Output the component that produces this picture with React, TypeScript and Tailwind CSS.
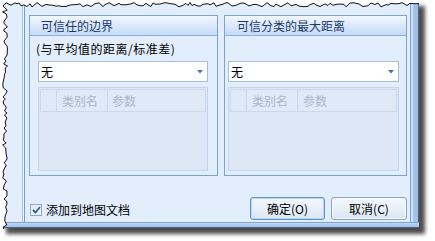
import React from "react";

function makeRand(seed: number) {
  let s = seed;
  return () => {
    s = (s * 16807) % 2147483647;
    return s / 2147483647;
  };
}

function TornEdges() {
  const r = makeRand(12345);
  const left: [number, number][] = [];
  for (let y = 6; y <= 232; y += 2 + Math.floor(r() * 3)) {
    left.push([2.5 + r() * 5, y]);
  }
  const top: [number, number][] = [];
  for (let x = 6; x <= 419; x += 2 + Math.floor(r() * 4)) {
    top.push([x, 2.5 + r() * 4.5]);
  }
  const leftPts = left.map((p) => `${p[0].toFixed(1)},${p[1]}`).join(" ");
  const topPts = top.map((p) => `${p[0]},${p[1].toFixed(1)}`).join(" ");
  const lastLeft = left[left.length - 1];
  return (
    <svg className="absolute left-0 top-0" width={435} height={241} viewBox="0 0 435 241">
      <polygon points={`0,0 ${topPts} 420,0`} fill="#ffffff" />
      <polygon points={`0,0 ${leftPts} ${lastLeft[0].toFixed(1)},241 0,241`} fill="#ffffff" />
      <polyline
        points={`${[...left].reverse().map((p) => `${p[0].toFixed(1)},${p[1]}`).join(" ")} ${topPts}`}
        fill="none"
        stroke="#111111"
        strokeWidth={1}
      />
    </svg>
  );
}

function Dropdown() {
  return (
    <div className="flex h-[21px] items-center justify-between border border-[#a7bedb] bg-white pl-[2px] pr-[4px]">
      <span className="text-[12px] leading-[14px] text-black">无</span>
      <svg width="6" height="4" viewBox="0 0 6 4">
        <polygon points="0,0 6,0 3,3.5" fill="#4d72a8" />
      </svg>
    </div>
  );
}

function Grid({ c1, c2, t1, t2 }: { c1: number; c2: number; t1: number; t2: number }) {
  return (
    <div className="flex h-[84px] flex-col border border-[#c3d5ee] bg-[#dde7f5] p-[1px]">
      <div className="flex h-[23px] border border-[#c9daef] bg-[#dfe9f7]">
        <div className="border-r border-[#c9daef]" style={{ width: c1 }} />
        <div
          className="flex items-center border-r border-[#c9daef] text-[12px] leading-[14px] text-[#a9b7c8]"
          style={{ width: c2, paddingLeft: t1 }}
        >
          类别名
        </div>
        <div
          className="flex flex-1 items-center text-[12px] leading-[14px] text-[#a9b7c8]"
          style={{ paddingLeft: t2 }}
        >
          参数
        </div>
      </div>
      <div className="flex-1" />
    </div>
  );
}

function GroupBox({
  title,
  label,
  width,
  padL,
  padR,
  titlePad,
  c1,
  c2,
  t1,
  t2,
}: {
  title: string;
  label?: string;
  width: number;
  padL: number;
  padR: number;
  titlePad: number;
  c1: number;
  c2: number;
  t1: number;
  t2: number;
}) {
  return (
    <div className="flex h-[161px] flex-col border border-[#7ea2cf] bg-[#e3eefd]" style={{ width }}>
      <div
        className="flex h-[20px] items-center border-b border-[#8fb0da] bg-gradient-to-b from-[#f1f7ff] to-[#c6dbf7] text-[12px] leading-[14px] text-[#1c3a6b]"
        style={{ paddingLeft: titlePad }}
      >
        {title}
      </div>
      <div className="flex flex-col" style={{ paddingLeft: padL, paddingRight: padR }}>
        <div
          className="mt-[5px] h-[16px] whitespace-nowrap text-[12px] leading-[16px] tracking-[0.5px] text-black"
          style={{ marginLeft: -2 }}
        >
          {label ?? ""}
        </div>
        <div className="mt-[4px]">
          <Dropdown />
        </div>
        <div className="mt-[5px]">
          <Grid c1={c1} c2={c2} t1={t1} t2={t2} />
        </div>
      </div>
    </div>
  );
}

function Button({ text, focused }: { text: string; focused?: boolean }) {
  return (
    <div
      className={
        "flex h-[23px] items-center justify-center rounded-[3px] border bg-gradient-to-b from-[#f4f8fd] to-[#dbe6f3] text-[12px] leading-[14px] text-black " +
        (focused ? "border-[#5e93cf] shadow-[inset_0_0_0_1px_#b9d7f5]" : "border-[#8aa3c0] shadow-[inset_0_0_0_1px_#f6f9fd]")
      }
      style={{ width: focused ? 75 : 76 }}
    >
      {text}
    </div>
  );
}

export default function App() {
  return (
    <div className="relative h-[241px] w-[435px] overflow-hidden bg-white font-['Noto_Sans_CJK_SC','Noto_Sans',sans-serif]">
      <div className="flex h-[228px] w-[419px] flex-col bg-[#e3eefd] shadow-[6px_6px_4px_rgba(0,0,0,0.7)]">
        <div className="flex flex-1">
          <div className="w-[22px]" />
          <div className="w-[1px] bg-[#a9c3e6]" />
          <div className="w-[1px] bg-[#eef5ff]" />
          <div className="w-[1px] bg-[#729cd2]" />
          <div className="flex flex-1 flex-col pt-[15px]">
            <div className="flex">
              <div className="ml-[4px]">
                <GroupBox
                  title="可信任的边界"
                  label="(与平均值的距离/标准差)"
                  width={189}
                  padL={8}
                  padR={9}
                  titlePad={11}
                  c1={16}
                  c2={51}
                  t1={5}
                  t2={4}
                />
              </div>
              <div className="ml-[6px]">
                <GroupBox
                  title="可信分类的最大距离"
                  width={183}
                  padL={3}
                  padR={7}
                  titlePad={12}
                  c1={16}
                  c2={51}
                  t1={5}
                  t2={5}
                />
              </div>
            </div>
            <div className="mt-[21px] flex items-start">
              <div className="ml-[5px] mt-[6px] flex items-center">
                <div className="flex h-[12px] w-[12px] items-center justify-center border border-[#8ea8c9] bg-gradient-to-br from-[#dde7f3] to-[#f7faff]">
                  <svg width="9" height="8" viewBox="0 0 9 8">
                    <path d="M1 4 L3.5 6.5 L8 1" fill="none" stroke="#2f5a9b" strokeWidth="1.8" />
                  </svg>
                </div>
                <span className="ml-[4px] text-[12px] leading-[14px] text-black">添加到地图文档</span>
              </div>
              <div className="flex-1" />
              <div className="mr-[3px] flex gap-[6px]">
                <Button text="确定(O)" focused />
                <Button text="取消(C)" />
              </div>
            </div>
          </div>
          <div className="w-[1px] bg-[#7fa4d2]" />
          <div className="w-[2px] bg-[#cfe0f6]" />
          <div className="w-[5px] bg-gradient-to-r from-[#a6c4ec] to-[#9dbde8]" />
          <div className="w-[1px] bg-[#4f6684]" />
        </div>
        <div className="h-[1px] bg-[#7fa4d2]" />
        <div className="h-[4px] bg-gradient-to-b from-[#c2d7f3] to-[#9fbfe8]" />
        <div className="h-[1px] bg-[#4f6684]" />
      </div>
      <TornEdges />
    </div>
  );
}
